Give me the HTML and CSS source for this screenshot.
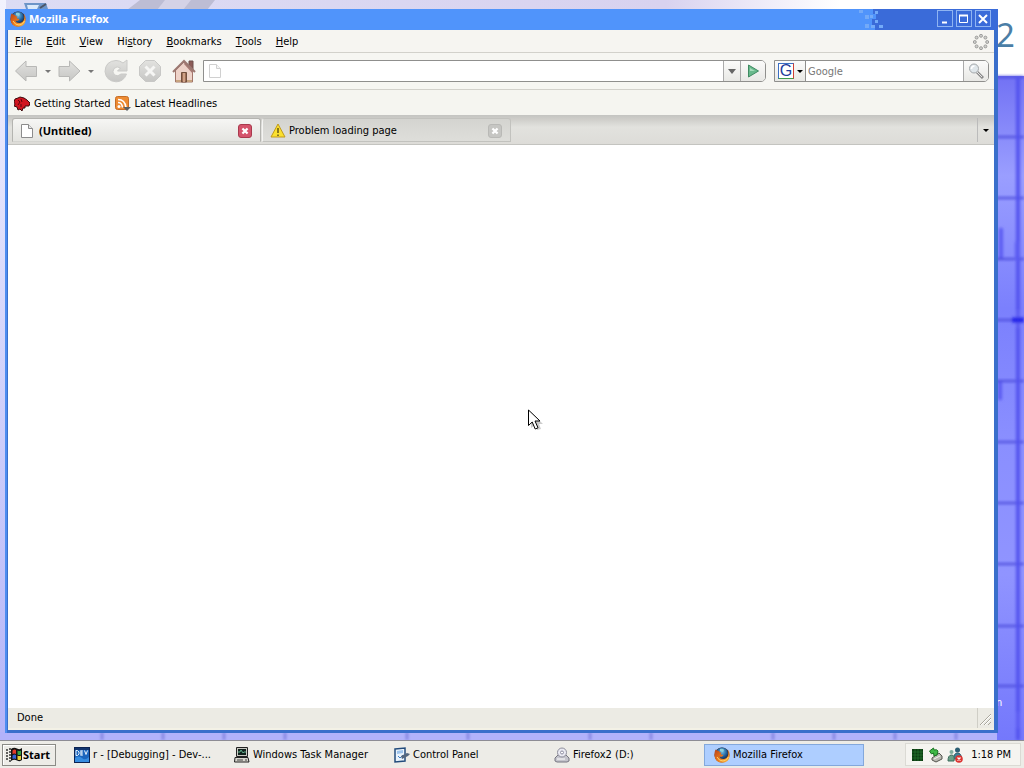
FILE: index.html
```html
<!DOCTYPE html>
<html lang="en">
<head>
    <meta charset="UTF-8">
    <meta name="viewport" content="width=device-width, initial-scale=1.0">
    <title>Mozilla Firefox</title>
    <link rel="stylesheet" href="styles.css">
</head>
<body>
    <!-- Shared icons -->
    <svg class="defs" aria-hidden="true">
        <defs>
            <radialGradient id="globe" cx="50%" cy="35%" r="65%">
                <stop offset="0" stop-color="#6fc2e8"/>
                <stop offset="0.6" stop-color="#22609c"/>
                <stop offset="1" stop-color="#102a55"/>
            </radialGradient>
            <linearGradient id="fox" x1="0" y1="0" x2="1" y2="1">
                <stop offset="0" stop-color="#b8441c"/>
                <stop offset="0.5" stop-color="#e8741a"/>
                <stop offset="1" stop-color="#ffc24a"/>
            </linearGradient>
            <linearGradient id="gray" x1="0" y1="0" x2="0" y2="1">
                <stop offset="0" stop-color="#e2e2df"/>
                <stop offset="1" stop-color="#c6c6c4"/>
            </linearGradient>
            <symbol id="firefox" viewBox="0 0 16 16">
                <circle cx="8" cy="8" r="7.5" fill="#3c2420"/>
                <circle cx="8" cy="6.500" r="6" fill="url(#globe)"/>
                <path d="M6 2q3-1 4 1l-1 2-3-1z" fill="#8fd0d8"/>
                <path d="M1.500 2.500Q0 5 .5 9q1 6.500 7.500 6.700 7-.2 7.700-7Q16 5 14 2.500q.8 3 .2 5.500-1.200 4-5 4-3 0-4-2.500 1.500.7 3 0L9.500 8 7 7.500Q6.500 6.500 7.500 5.500 5.500 5.800 5 4 3 3.500 1.500 2.500z" fill="url(#fox)"/>
                <path d="M3 10q2 4 6 4 4-.5 5.500-4" fill="none" stroke="#ffd468"/>
            </symbol>
            <symbol id="page" viewBox="0 0 12 14">
                <path d="M.5.500h7l4 4v9H.5z" fill="#fff" stroke="#8c8c8c"/>
                <path d="M7.500.500v4h4" fill="#e8e8e8" stroke="#8c8c8c"/>
            </symbol>
            <symbol id="cross" viewBox="0 0 14 14">
                <path d="M4 4l6 6m0-6l-6 6" stroke="#fff" stroke-width="2.600"/>
            </symbol>
        </defs>
    </svg>

    <main class="desktop">
        <svg class="wallpaper" viewBox="0 0 1024 740" preserveAspectRatio="xMaxYMax slice" aria-hidden="true">
            <defs>
                <linearGradient id="sky" x1="0" y1="0" x2="1" y2="0">
                    <stop offset="0" stop-color="#dcdcf4"/>
                    <stop offset="0.650" stop-color="#d8d2ef"/>
                    <stop offset="0.820" stop-color="#fff"/>
                </linearGradient>
                <linearGradient id="edge" x1="0" y1="0" x2="0" y2="1">
                    <stop offset="0" stop-color="#f2f2fd"/>
                    <stop offset="1" stop-color="#b4b4f8"/>
                </linearGradient>
                <linearGradient id="sea" x1="0" y1="0" x2="0" y2="1">
                    <stop offset="0" stop-color="#7272f4"/>
                    <stop offset="0.150" stop-color="#9a9eff"/>
                    <stop offset="0.350" stop-color="#7b80fd"/>
                    <stop offset="0.550" stop-color="#8a8fff"/>
                    <stop offset="0.750" stop-color="#9094ff"/>
                    <stop offset="1" stop-color="#7478fc"/>
                </linearGradient>
                <filter id="soft" x="-50%" y="-50%" width="200%" height="200%"><feGaussianBlur stdDeviation="1.500"/></filter>
            </defs>
            <rect width="1024" height="740" fill="url(#sky)"/>
            <rect width="6" height="740" fill="url(#edge)"/>
            <path d="M140 0h75l-8 10h-80z" fill="#bdbdd4"/>
            <path d="M165 0h26l-8 10h-26z" fill="#d4d2e6"/>
            <path d="M24 3h22l2 6H26z" fill="#6d95c8"/>
            <path d="M27 5h12l-2 4h-9z" fill="#dceafa"/>
            <path d="M40 8l6-4" stroke="#4a5568" stroke-width="2"/>
            <rect y="732" width="1000" height="8" fill="#b2b2fb"/>
            <rect x="997" y="76" width="27" height="664" fill="url(#sea)"/>
            <g filter="url(#soft)" stroke="#4646da" stroke-width="2">
                <path d="M990 77h34M990 137h34M990 198h34M990 259h34M990 320h34M990 381h34M990 442h34M990 503h34M990 564h34M990 626h34M990 686h34"/>
                <path d="M1018 77v663" stroke-width="4" stroke="#5353ee"/>
                <path d="M1001 228v30M1000 382v18M1017 242v18M1018 310v18M1018 712v16" stroke-width="4" stroke="#5c5cf2"/>
                <path d="M1012 320h12" stroke="#2222e8" stroke-width="5"/>
                <path d="M102 732v8M163 732v8M224 732v8M285 732v8M407 732v8M468 732v8M590 732v8M651 732v8M773 732v8M834 732v8M895 732v8M956 732v8" stroke="#7676d8"/>
            </g>
            <text x="996" y="47" class="wall-number">2</text>
            <text x="996" y="706" class="wall-label">n</text>
        </svg>

        <section class="window">
            <header class="titlebar">
                <svg class="icon16"><use href="#firefox"/></svg>
                <h1 class="title">Mozilla Firefox</h1>
                <svg class="pixels" viewBox="0 0 28 21" aria-hidden="true">
                    <path d="M14 0h14v21H16v-5h-3v-6h4V5h-3z" fill="#3a6bd9"/>
                    <path d="M0 1h4v3H0zM6 6h4v4H6zM6 15h4v4H6zM11 6h3v3h-3zM16 2h3v3h-3zM16 11h3v3h-3zM20 16h4v3h-4zM12 16h4v3h-4z" fill="#73aaf8"/>
                </svg>
                <div class="window-buttons">
                    <button class="window-button" aria-label="Minimize"><svg viewBox="0 0 14 14"><path d="M4 10.500h5" stroke="#fff" stroke-width="2"/></svg></button>
                    <button class="window-button" aria-label="Maximize"><svg viewBox="0 0 14 14"><path d="M2.500 3.500h8v7h-8z" fill="none" stroke="#fff"/><path d="M2 3.500h9" stroke="#fff" stroke-width="2"/></svg></button>
                    <button class="window-button" aria-label="Close"><svg viewBox="0 0 14 14"><path d="M3 3l8 8m0-8l-8 8" stroke="#fff" stroke-width="2"/></svg></button>
                </div>
            </header>

            <nav class="menubar">
                <button class="menu"><u>F</u>ile</button>
                <button class="menu"><u>E</u>dit</button>
                <button class="menu"><u>V</u>iew</button>
                <button class="menu">Hi<u>s</u>tory</button>
                <button class="menu"><u>B</u>ookmarks</button>
                <button class="menu"><u>T</u>ools</button>
                <button class="menu"><u>H</u>elp</button>
                <svg class="throbber" viewBox="0 0 16 16" aria-hidden="true">
                    <g fill="#cfcfcd" stroke="#8f8f8d" stroke-width="0.800">
                        <circle cx="8" cy="1.800" r="1.500"/><circle cx="12.400" cy="3.600" r="1.500"/><circle cx="14.200" cy="8" r="1.500"/><circle cx="12.400" cy="12.400" r="1.500"/>
                        <circle cx="8" cy="14.200" r="1.500"/><circle cx="3.600" cy="12.400" r="1.500"/><circle cx="1.800" cy="8" r="1.500"/><circle cx="3.600" cy="3.600" r="1.500"/>
                    </g>
                </svg>
            </nav>

            <div class="toolbar">
                <div class="nav-buttons">
                    <button class="nav-button narrow" aria-label="Back"><svg viewBox="0 0 24 24"><path d="M1.500 12L12 2v5.500h10.500v10H12V22z" fill="url(#gray)" stroke="#b8b8b6"/></svg></button>
                    <button class="caret-button" aria-label="Back history"><i class="caret"></i></button>
                    <button class="nav-button narrow" aria-label="Forward"><svg viewBox="0 0 24 24"><path d="M23 12L12.500 2v5.500H2v10h10.500V22z" fill="url(#gray)" stroke="#b8b8b6"/></svg></button>
                    <button class="caret-button" aria-label="Forward history"><i class="caret"></i></button>
                    <button class="nav-button" aria-label="Reload"><svg viewBox="0 0 24 24"><path d="M23 1v11h-9.500l3-3Q13 6.500 10 9.500q-2.500 3.500.5 6.500 3.500 2 6.500-1h5.500q-3 8-10.500 7.800Q2 22 1 12.500 1.500 2 12 1.500q4 0 7 2.500z" fill="url(#gray)" stroke="#cacac8"/></svg></button>
                    <button class="nav-button" aria-label="Stop"><svg viewBox="0 0 24 24"><path d="M7.500 1.500h9l6 6v9l-6 6h-9l-6-6v-9z" fill="url(#gray)" stroke="#c8c8c6"/><path d="M7.500 7.500l9 9m0-9l-9 9" stroke="#f6f6f4" stroke-width="3"/></svg></button>
                    <button class="nav-button" aria-label="Home"><svg viewBox="0 0 24 24"><path d="M17 2h4v9l-4-4z" fill="#8c5c58" stroke="#6e504c"/><path d="M3.500 11L12 3l8.500 8v12h-17z" fill="#eed2c8" stroke="#a17469"/><path d="M13 3l8 8v4L12 5z" fill="#a87a74"/><path d="M1 13L12 2l11 11" fill="none" stroke="#9c7972" stroke-width="2"/><path d="M4 23v-2h16v2z" fill="#c7a37e"/><path d="M9.500 13.500h5V23h-5z" fill="#a06f58" stroke="#73503e"/><path d="M11 14h2v9h-2z" fill="#d0a287"/></svg></button>
                </div>

                <div class="urlbar">
                    <svg class="page-icon faded"><use href="#page"/></svg>
                    <input class="url-input" type="text" aria-label="Location">
                    <button class="url-drop" aria-label="Show history"><i class="caret wide"></i></button>
                    <button class="go-button" aria-label="Go"><svg viewBox="0 0 14 14"><path d="M2.500 1L12.500 7l-10 6z" fill="#68b98c" stroke="#3f8a62"/><path d="M4 4l5 3H4z" fill="#a4dcba"/></svg></button>
                </div>

                <div class="searchbar">
                    <button class="engine" aria-label="Search engine">
                        <span class="g-logo">G</span>
                        <i class="caret black"></i>
                    </button>
                    <input class="search-input" type="text" placeholder="Google" aria-label="Search">
                    <button class="search-button" aria-label="Search the web"><svg viewBox="0 0 16 16"><path d="M9 9l6 6" stroke="#8a8a8a" stroke-width="3"/><path d="M9 9l5 5" stroke="#e6e6e6"/><circle cx="6" cy="5.500" r="4.500" fill="#dfe6ea" stroke="#a4a8ab"/><path d="M3.500 6q0-3 3-3" fill="none" stroke="#fff" stroke-width="1.500"/></svg></button>
                </div>
            </div>

            <nav class="bookmarks">
                <a class="bookmark" href="#start">
                    <svg class="icon16" viewBox="0 0 16 16"><path d="M0 6l1-3 3-1 2-1 4 1 3 2 3 3-1 3-4 0 0 2-2 0-1 3-2-2-2 1-1-3-3-1 1-2z" fill="#d11520" stroke="#3d0a0c"/><path d="M4 4l2 2-2 3M7 3l1 3M7 8v3" fill="none" stroke="#5c080c"/></svg>
                    Getting Started
                </a>
                <a class="bookmark" href="#headlines">
                    <svg class="icon16" viewBox="0 0 16 16"><rect x="0.500" y="0.500" width="13" height="13" rx="2" fill="#ed8b32" stroke="#c56d25"/><circle cx="4" cy="10.500" r="1.500" fill="#fff"/><path d="M3 6.500q4 0 4.500 5M3 3.500q7 0 8 8" fill="none" stroke="#fff" stroke-width="1.600"/><path d="M8 11h8l-4 4z" fill="#5d6063"/></svg>
                    Latest Headlines
                </a>
            </nav>

            <div class="tabstrip">
                <div class="tab active">
                    <button class="tab-title"><svg class="page-icon"><use href="#page"/></svg>(Untitled)</button>
                    <button class="tab-close" aria-label="Close tab"><svg viewBox="0 0 14 14"><use href="#cross"/></svg></button>
                </div>
                <div class="tab">
                    <button class="tab-title"><svg class="warn-icon" viewBox="0 0 16 15"><path d="M8 1l7 13H1z" fill="#fbe02e" stroke="#c09a1c" stroke-linejoin="round"/><path d="M8 5v5M8 11.500v1.500" stroke="#4c3f10" stroke-width="1.300"/></svg>Problem loading page</button>
                    <button class="tab-close" aria-label="Close tab"><svg viewBox="0 0 14 14"><use href="#cross"/></svg></button>
                </div>
                <button class="all-tabs" aria-label="List all tabs"><i class="caret black"></i></button>
            </div>

            <div class="page"></div>

            <footer class="statusbar">
                <span class="status">Done</span>
                <svg class="grip" viewBox="0 0 16 18" aria-hidden="true"><path d="M2 16L13 5M6 16l7-7M10 16l3-3" stroke="#aaa79c"/><path d="M3 16L13 6M7 16l6-6" stroke="#fff"/></svg>
            </footer>
        </section>

        <svg class="pointer" viewBox="0 0 16 24" aria-hidden="true">
            <path d="M3 3v16l4-3 2 5 4-1-2-5h4z" fill="#000" opacity="0.200"/>
            <path d="M.5 1v15.500L4.200 13l3 7 2.800-1.200L7 12h5z" fill="#fff" stroke="#000"/>
        </svg>
    </main>

    <footer class="taskbar">
        <button class="start">
            <svg viewBox="0 0 17 16"><path d="M0 3h2M0 6h2M0 9h2M0 12h2M3 2h2M3 5h2M3 8h2M3 11h2M3 14h2" stroke="#333" stroke-width="1.500"/><path d="M5 2q3-2 6-.5t5-.5v12q-2 2-5 .5T5 14z" fill="#111"/><path d="M6.500 3.500Q8.500 2 10 3v4Q8 6 6.500 7z" fill="#e23a2a"/><path d="M11.500 3.500q2 1 3.500 0v4q-2 1-3.500 0z" fill="#32a245"/><path d="M6.500 8.500Q8.500 7 10 8v4q-2-1-3.500 0z" fill="#3461d5"/><path d="M11.500 8.500q2 1 3.500 0v4q-2 1-3.500 0z" fill="#e9ce36"/></svg>
            Start
        </button>
        <div class="tasks">
            <button class="task">
                <svg class="icon16" viewBox="0 0 16 16"><rect x="0.500" y="0.500" width="15" height="15" fill="#1b65bd" stroke="#0b2352"/><path d="M1 1h14v2H1z" fill="#12356f"/><path d="M2 3.500h1.500L5 5v2L3.500 8.500H2zM6.500 4H9M7 3.500v5M6.500 6H9M6.500 8H9M10.500 3.500l1.500 4 1.500-4" fill="none" stroke="#e7f2fd"/><path d="M1 11q4-3 7 0t7-1v5H1z" fill="#368ce0"/></svg>
                <span>r - [Debugging] - Dev-...</span>
            </button>
            <button class="task">
                <svg class="icon16" viewBox="0 0 16 16"><path d="M2.500.5h11v9h-11z" fill="#c9c9c2" stroke="#222"/><path d="M4 2h8v6H4z" fill="#10201b"/><path d="M4 5h2l1-2 2 3 1-1h2" fill="none" stroke="#5fae8b"/><path d="M1 10.500h13l1 4.500H.5z" fill="#d7d6ce" stroke="#222"/><path d="M3 13h6M11 13h2" stroke="#444"/></svg>
                <span>Windows Task Manager</span>
            </button>
            <button class="task">
                <svg class="icon16" viewBox="0 0 16 16"><path d="M1 2l10-1v13L1 15z" fill="#e9f3fc" stroke="#234c7c" stroke-width="1.500"/><path d="M3 4l6-1v3L3 7z" fill="#9dc4ec"/><path d="M4 9l2 2 3-3" fill="none" stroke="#377cc8"/><path d="M7 9l6-3 3 1-2 2-6 3z" fill="#54677e"/></svg>
                <span>Control Panel</span>
            </button>
            <button class="task">
                <svg class="icon16" viewBox="0 0 16 16"><path d="M1 11l3-3h8l3 3v3l-2 1H3l-2-1z" fill="#c4c4cc" stroke="#777782"/><circle cx="8" cy="5.500" r="4.500" fill="#e9e9f2" stroke="#8e8e9b"/><circle cx="8" cy="5.500" r="1.500" fill="#fff" stroke="#8c8ca0"/><path d="M3 12h8" stroke="#fff"/></svg>
                <span>Firefox2 (D:)</span>
            </button>
            <button class="task current">
                <svg class="icon16"><use href="#firefox"/></svg>
                <span>Mozilla Firefox</span>
            </button>
        </div>
        <div class="tray">
            <svg class="icon16" viewBox="0 0 16 16"><rect x="3" y="2" width="11" height="12" fill="#0c3d12"/><path d="M3 5h11M3 8h11M3 11h11M6 2v12M9 2v12M12 2v12" stroke="#2b8038" stroke-width="0.600"/></svg>
            <svg class="icon16" viewBox="0 0 16 16"><path d="M4 11l7-5 3 3v3l-6 3-4-2z" fill="#b9b9b2" stroke="#55554f"/><path d="M6 12l6-3" stroke="#f4f4f0"/><path d="M1.500 4l4-3 .5 2q3-1 4 1l-1 4-3 1-.5-3-2 1z" fill="#3fb846" stroke="#1c7524"/></svg>
            <svg class="icon16" viewBox="0 0 16 16"><circle cx="10.500" cy="3" r="2.500" fill="#2c5f74"/><path d="M6 12q1-6 4.500-6t4 5z" fill="#3d8399" stroke="#28586a"/><circle cx="4.500" cy="5" r="2" fill="#7faf9f"/><path d="M1 14q0-6 3.500-6T7 14z" fill="#69a088" stroke="#3c6c5c"/><circle cx="12" cy="12" r="3.800" fill="#dc3330"/><path d="M10.500 10.500l3 3m0-3l-3 3" stroke="#fff" stroke-width="1.300"/></svg>
            <time class="clock">1:18 PM</time>
        </div>
    </footer>
</body>
</html>
```

FILE: styles.css
```css
* {
    box-sizing: border-box;
}
body {
    margin: 0;
    height: 100vh;
    display: flex;
    flex-direction: column;
    overflow: hidden;
    font-family: Tahoma, "DejaVu Sans Condensed", "Liberation Sans", sans-serif;
    font-size: 11px;
    line-height: 14px;
    color: #000;
}
button, input {
    font: inherit;
    color: inherit;
    margin: 0;
    padding: 0;
    border: none;
    background: none;
    border-radius: 0;
}
button {
    display: flex;
    align-items: center;
    white-space: nowrap;
}
svg {
    display: block;
    flex: none;
}
.defs {
    position: absolute;
    width: 0;
    height: 0;
}
.icon16 {
    width: 16px;
    height: 16px;
}
.title, .tab.active, .start {
    font-family: Tahoma, "Noto Sans", sans-serif;
    font-weight: bold;
}

/* Desktop */
.desktop {
    position: relative;
    flex: 1;
    min-height: 0;
    display: flex;
    padding: 9px 26px 7px 5px;
}
.wallpaper {
    position: absolute;
    top: 0;
    left: 0;
    width: 100%;
    height: 100%;
}
.wall-number {
    font-family: "Noto Sans", sans-serif;
    font-size: 33px;
    fill: #4b7ea6;
}
.wall-label {
    font-size: 11px;
    fill: #fff;
}
.pointer {
    position: absolute;
    left: 528px;
    top: 409px;
    width: 16px;
    height: 24px;
}

/* Window frame */
.window {
    position: relative;
    flex: 1;
    min-width: 0;
    display: flex;
    flex-direction: column;
    background-color: #3a6fcb;
    padding: 0 4px 3px 3px;
    box-shadow: inset 2px 0 #4d8df0;
}
.titlebar {
    height: 21px;
    display: flex;
    align-items: center;
    gap: 3px;
    padding-bottom: 2px;
    padding-left: 5px;
    margin: 0 -4px 0 -3px;
    background-color: #5094fb;
}
.title {
    flex: 1;
    margin: 0;
    font-size: 11px;
    color: #fff;
}
.pixels {
    width: 28px;
    height: 21px;
    margin-bottom: -2px;
}
.window-buttons {
    align-self: stretch;
    display: flex;
    align-items: center;
    gap: 3px;
    margin: 0 0 -2px -3px;
    padding: 0 7px 2px 50px;
    background-color: #3a6bd9;
}
.window-button {
    width: 16px;
    height: 17px;
    border: 1px solid #8fb4f2;
}
.window-button svg {
    width: 14px;
    height: 14px;
}

/* Menu bar */
.menubar {
    display: flex;
    align-items: center;
    height: 23px;
    padding: 1px 5px 0 7px;
    gap: 14px;
    background-color: #f6f5f1;
    border-bottom: 1px solid #d2d1cb;
}
.throbber {
    width: 16px;
    height: 16px;
    margin-left: auto;
}

/* Navigation toolbar */
.toolbar {
    display: flex;
    align-items: center;
    height: 37px;
    padding: 0 5px;
    background-color: #f6f6f2;
    border-bottom: 1px solid #d2d1cb;
}
.nav-buttons {
    display: flex;
    align-items: center;
}
.nav-button {
    width: 34px;
    height: 26px;
    justify-content: center;
}
.nav-button.narrow {
    width: 26px;
}
.nav-button svg {
    width: 24px;
    height: 24px;
}
.caret-button {
    width: 17px;
    height: 26px;
    justify-content: center;
}
.caret {
    border: 3px solid transparent;
    border-top-color: #777;
    border-bottom: none;
}
.caret.wide {
    border-width: 5px 4px 0;
    border-top-color: #666;
}
.caret.black {
    border-top-color: #000;
}
.urlbar, .searchbar {
    display: flex;
    align-items: center;
    height: 22px;
    background-color: #fff;
    border: 1px solid #8f8f8d;
    border-radius: 0 5px 5px 0;
    overflow: hidden;
}
.urlbar {
    flex: 1;
    min-width: 0;
    margin-left: 2px;
    padding-left: 5px;
}
.searchbar {
    width: 215px;
    margin-left: 8px;
}
.page-icon {
    width: 12px;
    height: 14px;
}
.page-icon.faded {
    opacity: 0.4;
}
.url-input, .search-input {
    flex: 1;
    min-width: 0;
    height: 20px;
    padding: 1px 2px 0;
    outline: none;
}
.search-input::placeholder {
    color: #777;
    opacity: 1;
}
.url-drop, .go-button, .search-button {
    height: 20px;
    justify-content: center;
    border-left: 1px solid #aaa;
    background: linear-gradient(#fbfbfa, #e8e8e5);
}
.url-drop {
    width: 17px;
}
.go-button, .search-button {
    width: 25px;
}
.go-button svg {
    width: 14px;
    height: 14px;
}
.search-button svg {
    width: 16px;
    height: 16px;
}
.engine {
    width: 31px;
    height: 20px;
    gap: 3px;
    padding-left: 3px;
    border-right: 1px solid #8f8f8d;
    background: linear-gradient(#fbfbfa, #e8e8e5);
}
.g-logo {
    width: 16px;
    height: 16px;
    border: 1px solid;
    border-color: #3b6fc4 #cf3f35 #3f9a4b #3b6fc4;
    background-color: #fff;
    color: #1d3d9c;
    font-family: "Liberation Sans", sans-serif;
    font-size: 16px;
    line-height: 14px;
}

/* Bookmarks toolbar */
.bookmarks {
    display: flex;
    align-items: center;
    height: 25px;
    gap: 4px;
    padding: 3px 6px 0;
    background-color: #f5f5f0;
}
.bookmark {
    display: flex;
    align-items: center;
    gap: 4px;
    color: #000;
    text-decoration: none;
    white-space: nowrap;
}

/* Tabs */
.tabstrip {
    display: flex;
    align-items: stretch;
    gap: 1px;
    height: 30px;
    padding: 3px 0 2px 4px;
    background: linear-gradient(#c4c4c1, #cecdc9 4px, #e2e2de 12px, #dddcd8);
    border-bottom: 1px solid #c4c4c0;
}
.tab {
    flex: 0 1 249px;
    min-width: 0;
    display: flex;
    align-items: center;
    padding: 1px 8px 0;
    border: 1px solid #c2c2be;
    border-left-color: #f4f4f2;
    border-radius: 3px 3px 0 0;
    background: linear-gradient(#d4d4d0, #dededa);
}
.tab.active {
    border-color: #b4b4b0;
    border-bottom-color: #d4d4d0;
    background: linear-gradient(#f6f6f4, #e4e4e0);
}
.tab-title {
    flex: 1;
    min-width: 0;
    gap: 6px;
}
.warn-icon {
    width: 16px;
    height: 15px;
    margin: 0 -3px 0 -1px;
}
.tab-close {
    width: 14px;
    height: 14px;
    border: 1px solid #b9b9b6;
    border-radius: 3px;
    background-color: #c6c6c3;
}
.tab.active .tab-close {
    border-color: #a93a4d;
    background-color: #d5546c;
}
.tab-close svg {
    width: 12px;
    height: 12px;
}
.all-tabs {
    width: 17px;
    margin-left: auto;
    justify-content: center;
    border-left: 1px solid #bbb;
}

/* Page area and status bar */
.page {
    flex: 1;
    min-height: 0;
    background-color: #fff;
}
.statusbar {
    display: flex;
    align-items: stretch;
    height: 22px;
    background-color: #ecebe4;
    border-bottom: 2px solid #f3f1e6;
}
.status {
    flex: 1;
    padding: 3px 9px;
}
.grip {
    width: 17px;
    height: 20px;
    border-left: 1px solid #cfcec6;
}

/* Taskbar */
.taskbar {
    position: relative;
    display: flex;
    align-items: center;
    height: 28px;
    padding: 0 3px 0 2px;
    background-color: #edece7;
    border-top: 1px solid #8d8c94;
}
.start {
    width: 54px;
    height: 22px;
    padding-left: 3px;
    border: 1px solid #8b8b86;
    box-shadow: inset 1px 1px #fff;
}
.start svg {
    width: 17px;
    height: 16px;
}
.tasks {
    flex: 1;
    min-width: 0;
    display: flex;
    padding-left: 8px;
}
.task {
    flex: 0 1 160px;
    min-width: 0;
    height: 22px;
    padding: 0 9px;
    gap: 3px;
    border: 1px solid transparent;
}
.task.current {
    background-color: #aeceff;
    border-color: #83a8dc;
}
.tray {
    display: flex;
    align-items: center;
    height: 23px;
    gap: 3px;
    padding: 0 9px 0 3px;
    background-color: #f5f4f0;
    border: 1px solid #dbdad4;
}
.clock {
    padding-left: 5px;
}
```
